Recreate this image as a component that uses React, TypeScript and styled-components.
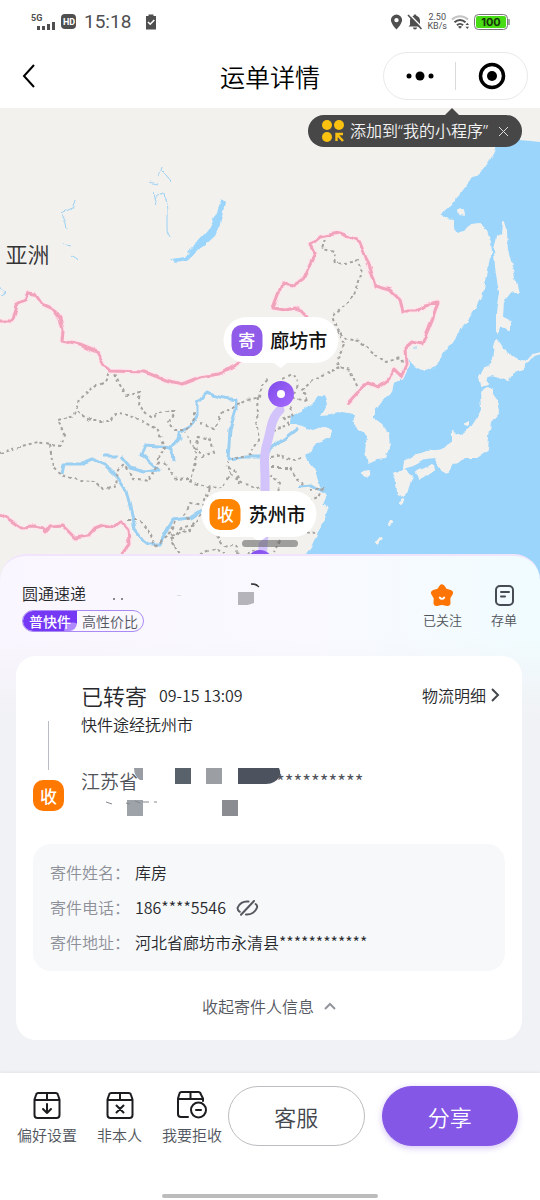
import React, { useState } from "react";
import styled, { createGlobalStyle } from "styled-components";

const GlobalStyle = createGlobalStyle`
  *, *::before, *::after { box-sizing: border-box; }
  body {
    margin: 0;
    background: #f1f2f5;
    color: #26282c;
    font-family: "Noto Sans CJK SC", "Noto Sans", sans-serif;
    font-size: 16px;
    font-weight: 350;
  }
  button {
    padding: 0;
    border: 0;
    background: none;
    color: inherit;
    font: inherit;
    cursor: pointer;
  }
  svg { display: block; flex: none; }
  h1, h2, p, dl, dd { margin: 0; font-weight: inherit; }
`;

const Page = styled.div`
  display: flex;
  flex-direction: column;
  min-height: 100vh;
`;

/* ---------- Header ---------- */

const Header = styled.header`
  background: #fff;
`;

const StatusBar = styled.div`
  display: flex;
  align-items: center;
  justify-content: space-between;
  height: 44px;
  padding: 0 30px 0 31px;
  color: #4f4f4f;
`;

const StatusGroup = styled.div<{ $gap: number }>`
  display: flex;
  align-items: center;
  gap: ${(p) => p.$gap}px;
`;

const Clock = styled.span`
  margin: 0 9px 0 2px;
  font: 400 19px/24px Roboto, sans-serif;
`;

const Speed = styled.span`
  display: flex;
  flex-direction: column;
  align-items: center;
  font: 400 9px/9px Roboto, sans-serif;
`;

const NavBar = styled.nav`
  display: grid;
  grid-template-columns: 1fr auto 1fr;
  align-items: center;
  height: 64px;
  padding: 0 12px;
  color: #000;
`;

const BackButton = styled.button`
  display: grid;
  place-items: center;
  width: 34px;
  height: 40px;
`;

const Title = styled.h1`
  font-size: 25px;
  line-height: 32px;
`;

const Capsule = styled.div`
  display: flex;
  align-items: center;
  justify-self: end;
  width: 145px;
  height: 48px;
  border: 1px solid #e9e9e9;
  border-radius: 24px;
`;

const CapsuleButton = styled.button`
  display: grid;
  flex: 1;
  place-items: center;
  height: 46px;
`;

const CapsuleDivider = styled.span`
  width: 1px;
  height: 28px;
  background: #dadada;
`;

/* ---------- Map ---------- */

const MapArea = styled.section`
  position: relative;
  height: 476px;
  overflow: hidden;
  background: #f2f1ee;

  > svg { width: 100%; height: 100%; }
`;

const AddTip = styled.div`
  position: absolute;
  top: 7px;
  right: 18px;
  display: flex;
  align-items: center;
  gap: 6px;
  height: 32px;
  padding: 0 11px 0 14px;
  border-radius: 16px;
  background: #474747;
  color: #f4f4f4;
  font-family: "Noto Sans", "Noto Sans CJK SC", sans-serif;
  line-height: 32px;
  white-space: nowrap;

  &::before {
    content: "";
    position: absolute;
    top: -7px;
    right: 62px;
    border: solid transparent;
    border-width: 0 8px 8px;
    border-bottom-color: #474747;
  }
`;

const TipClose = styled.button`
  display: grid;
  place-items: center;
  width: 16px;
  height: 32px;
  margin-left: 1px;
`;

const Continent = styled.span`
  position: absolute;
  top: 27%;
  left: 1%;
  color: #333;
  font-size: 22px;
  line-height: 32px;
`;

const CityLabel = styled.div<{ $left: number; $top: number }>`
  position: absolute;
  left: ${(p) => p.$left}%;
  top: ${(p) => p.$top}%;
  display: flex;
  align-items: center;
  gap: 8px;
  height: 46px;
  padding: 0 11px 0 8px;
  border-radius: 23px;
  background: #fff;
  color: #111;
  font-size: 19px;
  font-weight: 500;
  line-height: 46px;
  white-space: nowrap;
  transform: translateX(-50%);

  &::after {
    content: "";
    position: absolute;
    bottom: -5px;
    left: 50%;
    border: solid transparent;
    border-width: 6px 8px 0;
    border-top-color: #fff;
    transform: translateX(-50%);
  }
`;

const Badge = styled.span<{ $color: string }>`
  display: grid;
  place-items: center;
  width: 31px;
  height: 31px;
  border-radius: 10px;
  background: ${(p) => p.$color};
  color: #fff;
  font-size: 17px;
  font-weight: 500;
  line-height: 24px;
`;

const DragHandle = styled.span`
  position: absolute;
  top: 432px;
  left: 50%;
  width: 56px;
  height: 7px;
  border-radius: 4px;
  background: rgba(90, 90, 90, 0.55);
  transform: translateX(-50%);
`;

/* ---------- Sheet ---------- */

const Sheet = styled.main`
  position: relative;
  flex: 1;
  margin-top: -30px;
  padding: 0 18px 33px 16px;
  border-top: 2px solid #f1e4fd;
  border-radius: 26px 26px 0 0;
  background:
    linear-gradient(to bottom, rgba(241, 242, 245, 0) 80px, #f1f2f5 160px),
    linear-gradient(to right, #faf6ff, #faf9ff 55%, #f0fcff);
`;

const CarrierBar = styled.div`
  display: flex;
  justify-content: space-between;
  height: 100px;
  padding: 25px 5px 0 6px;
`;

const CarrierName = styled.h2`
  display: flex;
  align-items: center;
  font-size: 16px;
  line-height: 24px;
`;

const Tags = styled.div`
  display: inline-flex;
  height: 22px;
  margin-top: 5px;
  overflow: hidden;
  border: 1px solid #a98af5;
  border-radius: 11px;
  font-size: 14px;
  line-height: 20px;
`;

const Tag = styled.span<{ $strong?: boolean }>`
  padding: ${(p) => (p.$strong ? "0 6px" : "0 5px")};
  border-radius: ${(p) => (p.$strong ? "0 0 8px 0" : "0")};
  background: ${(p) =>
    p.$strong
      ? "radial-gradient(circle at 92% 100%, #b08bff 0 8px, transparent 9px), #7538f5"
      : "transparent"};
  color: ${(p) => (p.$strong ? "#fff" : "#55585f")};
  font-weight: ${(p) => (p.$strong ? 500 : 350)};
`;

const Actions = styled.div`
  display: flex;
  gap: 29px;
  height: 50px;
  padding-top: 2px;
`;

const IconButton = styled.button<{ $size: number; $gap: number }>`
  display: flex;
  flex-direction: column;
  align-items: center;
  gap: ${(p) => p.$gap}px;
  color: #50545c;
  font-size: ${(p) => p.$size}px;
  line-height: 20px;
  white-space: nowrap;
`;

const Card = styled.section`
  padding: 24px 17px 0;
  border-radius: 20px;
  background: #fff;
`;

const Timeline = styled.div`
  display: grid;
  grid-template-columns: 31px 1fr;
  gap: 17px;
`;

const Rail = styled.div`
  display: flex;
  flex-direction: column;
  align-items: center;
  gap: 10px;
  padding-top: 41px;

  &::before {
    content: "";
    width: 1px;
    height: 49px;
    background: #b9bcc4;
  }
`;

const StatusLine = styled.div`
  display: flex;
  align-items: center;
  gap: 12px;
  line-height: 30px;
`;

const StatusTitle = styled.h2`
  font-size: 22px;
`;

const DetailLink = styled.a`
  display: flex;
  align-items: center;
  gap: 5px;
  margin-left: auto;
  padding-right: 4px;
  color: inherit;
  text-decoration: none;
`;

const StatusText = styled.p`
  line-height: 28px;
`;

const Destination = styled.p`
  position: relative;
  display: flex;
  gap: 138px;
  height: 48px;
  margin-top: 30px;
  color: #50535a;
  font-size: 19px;
  line-height: 26px;

  > svg { position: absolute; top: 0; left: 0; }
`;

const SenderInfo = styled.dl`
  margin-top: 28px;
  padding: 11px 17px;
  border-radius: 18px;
  background: #f7f8fa;
`;

const InfoRow = styled.div`
  display: flex;
  align-items: center;
  line-height: 35px;

  dt { width: 85px; color: #8d9098; white-space: nowrap; }
  dd { display: flex; align-items: center; gap: 10px; }
`;

const CollapseButton = styled.button`
  display: flex;
  align-items: center;
  justify-content: center;
  gap: 10px;
  width: 100%;
  height: 69px;
  color: #55585f;
`;

/* ---------- Footer ---------- */

const Footer = styled.footer`
  position: sticky;
  bottom: 0;
  padding: 13px 0 2px;
  background: #fff;
  box-shadow: 0 -1px 3px rgba(0, 0, 0, 0.06);
`;

const FooterRow = styled.div`
  display: flex;
  align-items: center;
  height: 60px;
  padding: 0 22px 0 17px;
`;

const Tools = styled.div`
  display: flex;
  gap: 20px;
  margin-right: 6px;
  padding-top: 3px;
`;

const PillButton = styled.button<{ $primary?: boolean }>`
  flex: 1;
  height: 60px;
  margin-left: ${(p) => (p.$primary ? 17 : 0)}px;
  border: 1px solid ${(p) => (p.$primary ? "#8457e6" : "#bdbdc1")};
  border-radius: 30px;
  background: ${(p) => (p.$primary ? "#8457e6" : "#fff")};
  box-shadow: ${(p) => (p.$primary ? "0 2px 6px rgba(132, 87, 230, 0.35)" : "none")};
  color: ${(p) => (p.$primary ? "#fff" : "#44474d")};
  font-size: 22px;
`;

const HomeIndicator = styled.div`
  width: 216px;
  height: 4px;
  margin: 48px auto 0;
  border-radius: 2px;
  background: #bcbcbc;
`;

/* ---------- Drawings ---------- */

const seaPath =
  "M560 141 L540 142 L520 140 L505 142 L497 147 L490 160 L483 170 L470 181 L460 194 L450 206 L440 214 L446 218 L454 219 L454 228 L458 233 L464 231 L470 224 L480 223 L487 230 L491 242 L492 252 L488 262 L486 278 L482 298 L470 318 L455 337 L445 352 L435 366 L425 371 L414 366 L410 358 L406 368 L402 377 L394 384 L392 392 L380 402 L374 410 L374 418 L382 424 L389 434 L390 449 L386 458 L377 459 L368 463 L365 452 L367 436 L358 428 L352 422 L354 414 L343 412 L330 415 L321 416 L328 404 L325 394 L319 396 L310 405 L300 411 L291 415 L290 424 L296 424 L306 428 L314 430 L322 427 L332 431 L330 437 L318 442 L310 452 L305 457 L314 468 L319 482 L327 496 L323 504 L328 508 L324 522 L318 532 L312 545 L306 554 L300 600 L560 600 Z";

const islands = [
  "M503 222 L506 232 L507 250 L512 270 L518 293 L511 291 L504 300 L503 318 L510 322 L510 330 L500 326 L497 333 L497 312 L500 292 L496 268 L495 250 L498 236 L502 234 Z",
  "M497 340 L505 352 L518 360 L527 362 L522 368 L512 372 L508 380 L500 376 L490 374 L484 377 L488 384 L482 386 L480 378 L485 368 L492 365 L494 352 Z",
  "M488 388 L496 400 L498 412 L490 422 L488 437 L487 450 L477 457 L465 457 L452 463 L447 472 L440 468 L436 457 L425 458 L413 465 L403 468 L404 462 L413 457 L427 452 L443 450 L453 443 L453 432 L457 437 L470 430 L478 418 L482 410 L481 393 Z",
  "M393 474 L403 470 L412 475 L408 487 L405 497 L398 493 L397 483 Z",
  "M417 472 L433 465 L434 470 L425 475 L419 479 Z",
  "M363 473 l6 -1 l-2 3 z M376 542 l4 -5 l1 1 l-4 6 z M458 210 l5 1 l1 4 l-5 -1 z M465 424 l3 -3 l0 4 z M400 503 l4 -3 l-3 4 z M388 524 l3 -3 l1 2 z M488 389 l4 0 l0 5 l-5 0 z",
];

const pinkBorders = [
  "M0 321 L13 321 L17 304 L25 300 L28 293 L35 294 L42 304 L53 309 L60 318 L63 330 L62 341 L80 345 L97 352 L104 365 L110 371 L145 372 L165 380 L182 384 L200 377 L220 374 L235 365 L262 350 L300 330 L307 318 L297 308 L285 310 L273 308 L282 284 L292 286 L303 279 L315 253 L311 245 L320 237 L340 233 L352 238 L360 242 L369 265 L376 286 L390 290 L400 300 L403 311 L417 311 L425 305 L438 302 L434 315 L428 330 L422 344 L412 342 L405 348 L406 365 L401 376 L395 370 L388 380 L378 387 L368 383 L358 392 L347 404",
  "M0 514 L10 520 L20 527 L35 526 L43 528 L46 533 L50 526 L62 525 L70 533 L75 538 L88 536 L95 528 L103 525 L115 527 L121 522 L128 530 L129 543 L122 556",
];

const provinceLines = [
  "M0 453 L22 446 L38 442 L50 445 L60 446 L64 435 L58 420 L75 415 L79 399 L92 388 L105 382 L109 372",
  "M50 445 L53 468 L62 475 L80 481 L95 482 L104 490 L116 486 L118 470 L124 465 L133 478 L148 481 L155 472 L160 460",
  "M78 412 L92 421 L110 421 L115 413 L128 414 L142 421 L158 430 L164 447 L157 460",
  "M115 373 L120 385 L126 395 L140 393 L138 405 L152 417 L165 411 L174 411 L169 422 L175 430 L186 430 L194 418 L194 410",
  "M164 463 L178 480 L190 479 L196 463 L193 445 L185 432 M196 450 L199 436 L210 440 L213 452 L202 457 L194 448",
  "M200 424 L214 428 L223 413 L236 406 L248 400 L260 397 L262 385 L268 378 M258 397 L256 420 L259 440 L250 455 L232 458",
  "M190 480 L210 488 L222 487 L230 475 L228 462 M230 475 L245 484 L258 487 L266 492 M210 488 L203 506 L190 504 L185 515 L195 525 L178 530 L171 540 L180 555",
  "M128 520 L139 520 L150 533 L155 546 L167 537 L175 522 M217 536 L224 545 L238 547 L237 555 M200 553 L215 549 L225 553 M246 555 L256 549",
  "M325 240 L322 249 L334 252 L336 264 L352 262 L358 260 L362 268 L354 295 L346 305 L332 315 L336 327 L347 339 L360 341 L376 355 L386 362 L400 358 L405 366",
  "M338 330 L345 345 L338 355 L340 367 L350 370 L358 388 M340 367 L322 376 L310 383 L302 390 L307 401 M283 378 L292 373 L298 384 L294 398 L306 401",
  "M290 407 L293 416 L284 418 L290 425 M272 430 L286 427 M270 458 L282 456 L295 461 L303 456 M272 468 L290 468 L298 480 L302 484",
  "M270 475 L280 484 L276 500 M310 490 L322 488 L318 498 L308 502 M300 531 L314 534 M280 540 L274 552",
  "M240 484 L235 470 L226 467 M175 545 L170 535 L190 530 L200 515 L212 497",
];

const rivers = [
  "M62 474 L64 464 L80 464 L92 459 L105 465 L118 478 L126 490 L131 510 L135 530 L143 540 L148 544 L160 544 L166 532 L173 520 L190 518 L205 508",
  "M104 456 L117 456 M120 456 L130 468 L145 472 L159 470 L150 462 L141 454 L145 445 L160 446 L172 447 L180 438 L179 433 L190 426 L197 415 L197 403 L207 393 L220 397 L236 400 L236 410 L230 430 L228 459 L245 457 L262 457 L272 448 L285 438 L298 428",
  "M166 446 L172 450 L173 461",
  "M298 486 L312 485 L324 492",
];

function ChinaMap() {
  return (
    <svg viewBox="0 108 540 476" preserveAspectRatio="xMidYMin slice" aria-hidden="true">
      <defs>
        <filter id="coast" filterUnits="userSpaceOnUse" x="-10" y="100" width="570" height="500">
          <feTurbulence type="fractalNoise" baseFrequency="0.12" numOctaves="2" seed="4" />
          <feDisplacementMap in="SourceGraphic" scale="5" xChannelSelector="R" yChannelSelector="G" />
        </filter>
        <filter id="border" filterUnits="userSpaceOnUse" x="-10" y="100" width="570" height="500">
          <feTurbulence type="fractalNoise" baseFrequency="0.1" numOctaves="1" seed="7" />
          <feDisplacementMap in="SourceGraphic" scale="6" xChannelSelector="R" yChannelSelector="G" />
        </filter>
        <linearGradient id="pin" x1="0" y1="0" x2="1" y2="1">
          <stop offset="0" stopColor="#7f4be8" />
          <stop offset="1" stopColor="#a66bff" />
        </linearGradient>
      </defs>
      <g filter="url(#coast)">
        <path d={seaPath} fill="#9bd5fb" />
        {islands.map((d) => (
          <path key={d} d={d} fill="#f2f1ee" stroke="#f2f1ee" strokeWidth="2" strokeLinejoin="round" />
        ))}
        <path
          d="M222 199 L225 202 L220 225 L215 236 L205 245 L195 252 L188 261 L176 263 L171 259 L185 257 L195 244 L208 230 L217 212 Z"
          fill="#9bd5fb"
        />
      </g>
      <g filter="url(#border)">
        <g fill="none" stroke="#9bd0f3" strokeLinejoin="round">
          {rivers.map((d) => (
            <path key={d} d={d} strokeWidth="3" />
          ))}
          <path
            d="M150 181 l7 2 M162 167 l-3 10 M163 171 l8 10 M153 192 l4 11 M156 197 l8 -3 l3 16 l0 20 l3 6 M75 201 l-3 7 l-11 6 l5 8 l1 7 M64 244 l8 2 M70 256 l8 5 M0 288 l6 4 l-6 3 M413 348 l4 0"
            strokeWidth="1"
          />
        </g>
        <path d="M527 362 l6 -7 l7 -2" fill="none" stroke="#f2f1ee" strokeWidth="2" />
        <g fill="none" stroke="#a5a29f" strokeWidth="2" strokeDasharray="3 3">
          {provinceLines.map((d) => (
            <path key={d} d={d} />
          ))}
        </g>
        <g fill="none" strokeLinejoin="round">
          {pinkBorders.map((d) => (
            <path key={d} d={d} stroke="#fbe9ee" strokeWidth="6" />
          ))}
          {pinkBorders.map((d) => (
            <path key={d} d={d} stroke="#f2a3bc" strokeWidth="3" />
          ))}
        </g>
      </g>
      <path
        d="M280 410 C271 418 271 430 268 440 C264 452 264 460 265 475 V520 L262 560"
        fill="none"
        stroke="#d2c3fb"
        strokeWidth="9"
        strokeLinecap="round"
      />
      <circle cx="281" cy="394" r="13" fill="url(#pin)" />
      <circle cx="281" cy="394" r="4" fill="#fff" />
      <circle cx="260" cy="563" r="13" fill="url(#pin)" />
    </svg>
  );
}

function SignalIcon() {
  return (
    <svg width="25" height="18" viewBox="0 0 25 18" fill="currentColor" aria-hidden="true">
      <text x="0" y="8" fontSize="9" fontWeight="700" fontFamily="Roboto, sans-serif">5G</text>
      <path d="M6 13h3v4h-3zM11 13h3v4h-3zM16 11h3v6h-3zM21 9h3v8h-3z" />
    </svg>
  );
}

function HdIcon() {
  return (
    <svg width="16" height="16" viewBox="0 0 16 16" aria-hidden="true">
      <rect width="15" height="15" x="0" y="0" rx="4" fill="#4f4f4f" />
      <text x="8" y="11" fontSize="9" fontWeight="700" fontFamily="Roboto, sans-serif" fill="#fff" textAnchor="middle">HD</text>
    </svg>
  );
}

function ClipboardIcon() {
  return (
    <svg width="12" height="16" viewBox="0 0 12 16" aria-hidden="true">
      <path d="M1 2h2.500V0.500h5V2H11v13.500H1z" fill="#4f4f4f" />
      <path d="M3 8l2.200 2.200L9.300 6" fill="none" stroke="#fff" strokeWidth="1.600" />
    </svg>
  );
}

function LocationIcon() {
  return (
    <svg width="13" height="16" viewBox="0 0 13 16" aria-hidden="true">
      <path d="M6.500 0.500a5.600 5.600 0 0 0-5.600 5.600C0.900 10 6.500 15.500 6.500 15.500S12.100 10 12.100 6.100A5.600 5.600 0 0 0 6.500 0.500zm0 3.400a2.200 2.200 0 1 1 0 4.400a2.200 2.200 0 0 1 0-4.400z" fill="#4f4f4f" fillRule="evenodd" />
    </svg>
  );
}

function BellOffIcon() {
  return (
    <svg width="16" height="16" viewBox="0 0 16 16" aria-hidden="true">
      <path d="M8 0.500c0.800 0 1.300 0.500 1.400 1.200C11.700 2.300 13 4.200 13 6.500V11l1.500 1.500H1.500L3 11V6.500c0-2.300 1.300-4.200 3.600-4.800C6.700 1 7.200 0.500 8 0.500zM6 13.500h4c0 1-0.900 2-2 2s-2-1-2-2z" fill="#4f4f4f" />
      <path d="M2.500 0.500L16 14" stroke="#fff" strokeWidth="1.500" />
      <path d="M1 1l13.500 14" stroke="#4f4f4f" strokeWidth="1.600" />
    </svg>
  );
}

function WifiIcon() {
  return (
    <svg width="19" height="16" viewBox="0 0 19 16" fill="none" aria-hidden="true">
      <path d="M1 5.500C5.500 1 12.500 1 17 5.500" stroke="#c4c4c4" strokeWidth="2" />
      <path d="M3.500 8.300c3.200-3.100 7.800-3.100 11 0M6 11.200c1.700-1.700 4.300-1.700 6 0" stroke="#4f4f4f" strokeWidth="2" />
      <path d="M9 14.800l-2-2c1.200-1 2.800-1 4 0z" fill="#4f4f4f" />
      <path d="M14.500 11l1.800-2.300L18 11zM14.500 12.800l1.800 2.300L18 12.800z" fill="#4f4f4f" />
    </svg>
  );
}

function BatteryIcon() {
  return (
    <svg width="36" height="16" viewBox="0 0 36 16" role="img" aria-label="100">
      <rect x="0.500" y="0.500" width="33" height="15" rx="4" fill="#fff" stroke="#777" />
      <rect x="2" y="2" width="30" height="12" rx="2" fill="#48dc14" />
      <path d="M34.500 5h1v6h-1z" fill="#555" />
      <text x="17" y="12" fontSize="11" fontWeight="700" fontFamily="Inter, sans-serif" fill="#16350a" textAnchor="middle">100</text>
    </svg>
  );
}

function AppGridIcon() {
  return (
    <svg width="22" height="22" viewBox="0 0 22 22" aria-hidden="true">
      <g fill="#fbc111">
        <circle cx="5" cy="5" r="5" />
        <circle cx="17" cy="5" r="5" />
        <circle cx="5" cy="17" r="5" />
      </g>
      <path d="M14.500 21V14H21M15 14.500L21 21" fill="none" stroke="#fbc111" strokeWidth="2.400" />
    </svg>
  );
}

function StarFaceIcon() {
  return (
    <svg width="24" height="24" viewBox="0 0 24 24" aria-hidden="true">
      <path
        d="M12 4.500L14.800 8.500L20 10L17.300 14.500L17.500 20L12 18.800L6.500 20L6.700 14.500L4 10L9.200 8.500Z"
        fill="#ff7505"
        stroke="#ff7505"
        strokeWidth="6"
        strokeLinejoin="round"
      />
      <path d="M9.800 14.500c1 1.800 3.400 1.800 4.400 0" fill="none" stroke="#fff" strokeWidth="2" strokeLinecap="round" />
    </svg>
  );
}

function ReceiptIcon() {
  return (
    <svg width="24" height="24" viewBox="0 0 24 24" fill="none" stroke="#474b53" strokeWidth="2" strokeLinecap="round" aria-hidden="true">
      <rect x="4" y="3" width="17" height="19" rx="4" />
      <path d="M9 9h8M9 13.500h4" />
    </svg>
  );
}

function HiddenIcon() {
  return (
    <svg width="23" height="18" viewBox="0 0 23 18" fill="none" stroke="#55585f" strokeWidth="2" strokeLinecap="round" aria-hidden="true">
      <path d="M12.500 2.600C7.500 1.800 2.800 4.600 1.500 9C1.600 10.800 2.400 12 3.800 12.800M18 2L5 15.800M19.600 5C21 6 21.400 7.200 21 8.600C19.200 13 14.800 15.800 10 15.400" />
    </svg>
  );
}

function BoxIcon({ kind }: { kind: "down" | "cross" | "refuse" }) {
  return (
    <svg width="30" height="28" viewBox="0 0 30 28" fill="none" stroke="#1c1d20" strokeWidth="2" strokeLinecap="round" strokeLinejoin="round" aria-hidden="true">
      {kind === "refuse" ? (
        <>
          <path d="M11 26H4a3 3 0 0 1-3-3V7.500L2.300 3a2.500 2.500 0 0 1 2.500-2h16.500A2.500 2.500 0 0 1 23.700 3L26 7.500V10M1 8H25.500M13.500 1v7" />
          <circle cx="21.500" cy="19" r="7.500" />
          <path d="M19 19h5" />
        </>
      ) : (
        <path d="M2.500 8.500L4 4a2.500 2.500 0 0 1 2.500-2h17A2.500 2.500 0 0 1 26 4l1.500 4.500V24a3 3 0 0 1-3 3h-19a3 3 0 0 1-3-3zM2.500 9h25M15 2v6.500" />
      )}
      {kind === "down" && <path d="M15 13v9M11 18l4 4l4-4" />}
      {kind === "cross" && <path d="M11.500 14.500l7 7M18.500 14.500l-7 7" />}
    </svg>
  );
}

function NameMosaic() {
  return (
    <svg width="180" height="24" viewBox="0 0 180 24" aria-hidden="true">
      <path d="M27 17h2v2h-2zM35 17h2v2h-2z" fill="#888a90" />
      <path d="M91 14h4v1h-4z" fill="#ddd" />
      <path d="M152 11h16v11l-16 5z" fill="#b5b4ba" />
      <path d="M165 3q6-1 8 3q-4-3-8-3z" fill="#333" stroke="#333" />
    </svg>
  );
}

function AddressMosaic() {
  return (
    <svg width="200" height="48" viewBox="0 0 200 48" aria-hidden="true">
      <path d="M58 0h4v20h-4z" fill="#fff" />
      <path d="M53 0h9v12h-3q-6-4-6-12z" fill="#999ca3" />
      <rect x="94" y="0" width="16" height="16" fill="#59616b" />
      <rect x="125" y="0" width="16" height="16" fill="#9b9ea2" />
      <path d="M157 0h41q4 9-5 14q-3 2-8 2h-28z" fill="#4c525e" />
      <rect x="46" y="32" width="16" height="16" fill="#9da3a8" />
      <rect x="141" y="32" width="16" height="16" fill="#8b8c91" />
      <path d="M25 34l6 2M45 35l4 1M54 33l5 2M62 34h6M73 34h3" stroke="#85878c" />
    </svg>
  );
}

function Chevron({ d, width, height, color, weight = 2 }: { d: string; width: number; height: number; color: string; weight?: number }) {
  return (
    <svg width={width} height={height} viewBox={`0 0 ${width} ${height}`} fill="none" stroke={color} strokeWidth={weight} aria-hidden="true">
      <path d={d} />
    </svg>
  );
}

/* ---------- Screen ---------- */

export default function App() {
  const [tipOpen, setTipOpen] = useState(true);
  const [expanded, setExpanded] = useState(true);

  return (
    <Page>
      <GlobalStyle />
      <Header>
        <StatusBar>
          <StatusGroup $gap={5}>
            <SignalIcon />
            <HdIcon />
            <Clock>15:18</Clock>
            <ClipboardIcon />
          </StatusGroup>
          <StatusGroup $gap={4}>
            <LocationIcon />
            <BellOffIcon />
            <Speed>
              <span>2.50</span>
              <span>KB/s</span>
            </Speed>
            <WifiIcon />
            <BatteryIcon />
          </StatusGroup>
        </StatusBar>
        <NavBar>
          <BackButton aria-label="返回">
            <Chevron d="M12 1L2 12L12 23" width={14} height={24} color="#000" />
          </BackButton>
          <Title>运单详情</Title>
          <Capsule>
            <CapsuleButton aria-label="更多">
              <svg width="30" height="10" viewBox="0 0 30 10" aria-hidden="true">
                <circle cx="4" cy="5" r="2.500" />
                <circle cx="15" cy="5" r="4.500" />
                <circle cx="26" cy="5" r="2.500" />
              </svg>
            </CapsuleButton>
            <CapsuleDivider />
            <CapsuleButton aria-label="关闭">
              <svg width="28" height="28" viewBox="0 0 28 28" aria-hidden="true">
                <circle cx="14" cy="14" r="11.500" fill="none" stroke="#000" strokeWidth="3.500" />
                <circle cx="14" cy="14" r="5" />
              </svg>
            </CapsuleButton>
          </Capsule>
        </NavBar>
      </Header>

      <MapArea>
        <ChinaMap />
        <Continent>亚洲</Continent>
        <CityLabel $left={52} $top={44}>
          <Badge $color="#8f5be8">寄</Badge>
          廊坊市
        </CityLabel>
        <CityLabel $left={48} $top={80.5}>
          <Badge $color="#ff8400">收</Badge>
          苏州市
        </CityLabel>
        <DragHandle />
        {tipOpen && (
          <AddTip>
            <AppGridIcon />
            <span>添加到“我的小程序”</span>
            <TipClose aria-label="关闭提示" onClick={() => setTipOpen(false)}>
              <Chevron d="M1 1L10 10M10 1L1 10" width={11} height={11} color="#ddd" weight={1} />
            </TipClose>
          </AddTip>
        )}
      </MapArea>

      <Sheet>
        <CarrierBar>
          <div>
            <CarrierName>
              圆通速递
              <NameMosaic />
            </CarrierName>
            <Tags>
              <Tag $strong>普快件</Tag>
              <Tag>高性价比</Tag>
            </Tags>
          </div>
          <Actions>
            <IconButton $size={13} $gap={3}>
              <StarFaceIcon />
              已关注
            </IconButton>
            <IconButton $size={13} $gap={3}>
              <ReceiptIcon />
              存单
            </IconButton>
          </Actions>
        </CarrierBar>

        <Card>
          <Timeline>
            <Rail>
              <Badge $color="#ff7800">收</Badge>
            </Rail>
            <div>
              <StatusLine>
                <StatusTitle>已转寄</StatusTitle>
                <time>09-15 13:09</time>
                <DetailLink href="#logistics">
                  物流明细
                  <Chevron d="M1 1L7 7L1 13" width={10} height={14} color="#44474d" />
                </DetailLink>
              </StatusLine>
              <StatusText>快件途经抚州市</StatusText>
              <Destination>
                <span>江苏省</span>
                <span>**********</span>
                <AddressMosaic />
              </Destination>
            </div>
          </Timeline>

          {expanded && (
            <SenderInfo>
              <InfoRow>
                <dt>寄件姓名：</dt>
                <dd>库房</dd>
              </InfoRow>
              <InfoRow>
                <dt>寄件电话：</dt>
                <dd>
                  186****5546
                  <button aria-label="显示电话">
                    <HiddenIcon />
                  </button>
                </dd>
              </InfoRow>
              <InfoRow>
                <dt>寄件地址：</dt>
                <dd>河北省廊坊市永清县************</dd>
              </InfoRow>
            </SenderInfo>
          )}
          <CollapseButton aria-expanded={expanded} onClick={() => setExpanded(!expanded)}>
            收起寄件人信息
            <Chevron d="M1 7L6 2L11 7" width={12} height={8} color="#92959d" />
          </CollapseButton>
        </Card>
      </Sheet>

      <Footer>
        <FooterRow>
          <Tools>
            <IconButton $size={15} $gap={6}>
              <BoxIcon kind="down" />
              偏好设置
            </IconButton>
            <IconButton $size={15} $gap={6}>
              <BoxIcon kind="cross" />
              非本人
            </IconButton>
            <IconButton $size={15} $gap={6}>
              <BoxIcon kind="refuse" />
              我要拒收
            </IconButton>
          </Tools>
          <PillButton>客服</PillButton>
          <PillButton $primary>分享</PillButton>
        </FooterRow>
        <HomeIndicator />
      </Footer>
    </Page>
  );
}
